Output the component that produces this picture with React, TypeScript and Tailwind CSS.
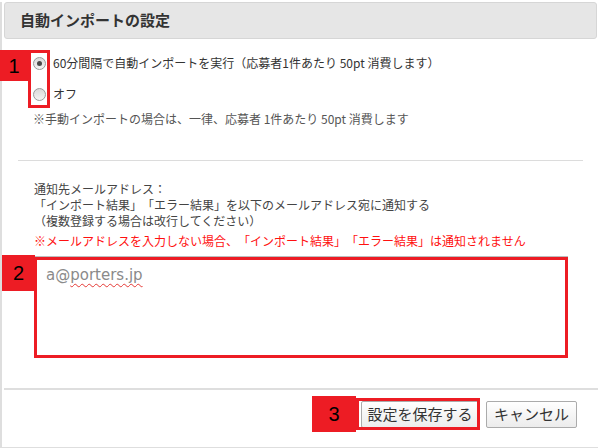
import React from "react";

const font = { fontFamily: '"Noto Sans CJK JP", "Noto Sans", sans-serif' };

function Radio({ checked }: { checked?: boolean }) {
  return (
    <span className="flex h-[13px] w-[13px] items-center justify-center rounded-full border border-[#9a9a9a] bg-gradient-to-b from-[#d9d9d9] to-[#f4f4f4]">
      {checked && <span className="h-[5px] w-[5px] rounded-full bg-[#4a4a4a]" />}
    </span>
  );
}

function Marker({ n, className }: { n: string; className: string }) {
  return (
    <div
      className={`absolute flex items-center justify-center bg-[#ed1c24] text-[20px] text-black ${className}`}
      style={{ fontFamily: '"Liberation Sans", sans-serif' }}
    >
      {n}
    </div>
  );
}

export default function App() {
  return (
    <div
      className="relative h-[448px] w-[598px] overflow-hidden bg-white text-[#333] [text-spacing-trim:space-all]"
      style={font}
    >
      <div className="h-[447px] border-b-2 border-l-2 border-[#dedede]">
        {/* header */}
        <div className="mr-[1px] ml-[2px] mt-[2px] flex h-[37px] items-center rounded-[3px] border border-[#d6d6d6] bg-[#e6e6e6] pl-[15px] text-[15px] font-bold">
          自動インポートの設定
        </div>

        {/* import interval */}
        <div className="pl-[31px] pt-[16px] text-[12px]">
          <div className="flex h-[16px] items-center gap-[7px]">
            <Radio checked />
            <span>60分間隔で自動インポートを実行（応募者1件あたり 50pt 消費します）</span>
          </div>
          <div className="mt-[15px] flex h-[16px] items-center gap-[7px]">
            <Radio />
            <span>オフ</span>
          </div>
          <div className="mt-[9px] h-[16px] leading-[16px] text-[#555]">
            ※手動インポートの場合は、一律、応募者 1件あたり 50pt 消費します
          </div>
        </div>

        <div className="ml-[16px] mr-[15px] mt-[33px] h-px bg-[#dcdcdc]" />

        {/* notify mail */}
        <div className="pl-[32px] pt-[20px] text-[12px] leading-[16px] text-[#444]">
          <div>通知先メールアドレス：</div>
          <div>「インポート結果」「エラー結果」を以下のメールアドレス宛に通知する</div>
          <div>（複数登録する場合は改行してください）</div>
          <div className="mt-[4px] text-[#ff1010]">
            ※メールアドレスを入力しない場合、「インポート結果」「エラー結果」は通知されません
          </div>
        </div>

        <div
          className="ml-[33px] mt-[7px] h-[102px] w-[533px] border-t-2 border-[#bdbdbd] bg-white px-[11px] pt-[6px] text-[15px] text-[#8a8a8a]"
          style={{ fontFamily: '"DejaVu Sans", sans-serif' }}
        >
          a@<span className="underline decoration-[#e53935] decoration-wavy decoration-1 underline-offset-[3px]">porters.jp</span>
        </div>

        <div className="ml-[2px] mt-[30px] h-[2px] bg-[#dedede]" />

        {/* buttons */}
        <div className="flex justify-end gap-[7px] pr-[21px] pt-[11px]">
          <button className="h-[27px] w-[118px] rounded-[2px] border border-[#ababab] bg-gradient-to-b from-white to-[#ececec] text-[15px] text-[#333]">
            設定を保存する
          </button>
          <button className="h-[27px] w-[91px] rounded-[2px] border border-[#ababab] bg-gradient-to-b from-white to-[#ececec] text-[15px] text-[#333]">
            キャンセル
          </button>
        </div>
      </div>

      {/* annotations */}
      <Marker n="1" className="left-0 top-[50px] h-[31px] w-[28px]" />
      <div className="absolute left-[28px] top-[50px] h-[58px] w-[22px] border-[3px] border-[#ed1c24]" />

      <Marker n="2" className="left-[2px] top-[255px] h-[36px] w-[33px]" />
      <div className="absolute left-[34px] top-[257px] h-[101px] w-[534px] border-[3px] border-[#ed1c24]" />

      <Marker n="3" className="left-[312px] top-[396px] h-[36px] w-[44px]" />
      <div className="absolute left-[356px] top-[398px] h-[32px] w-[124px] border-[3px] border-[#ed1c24]" />
    </div>
  );
}
